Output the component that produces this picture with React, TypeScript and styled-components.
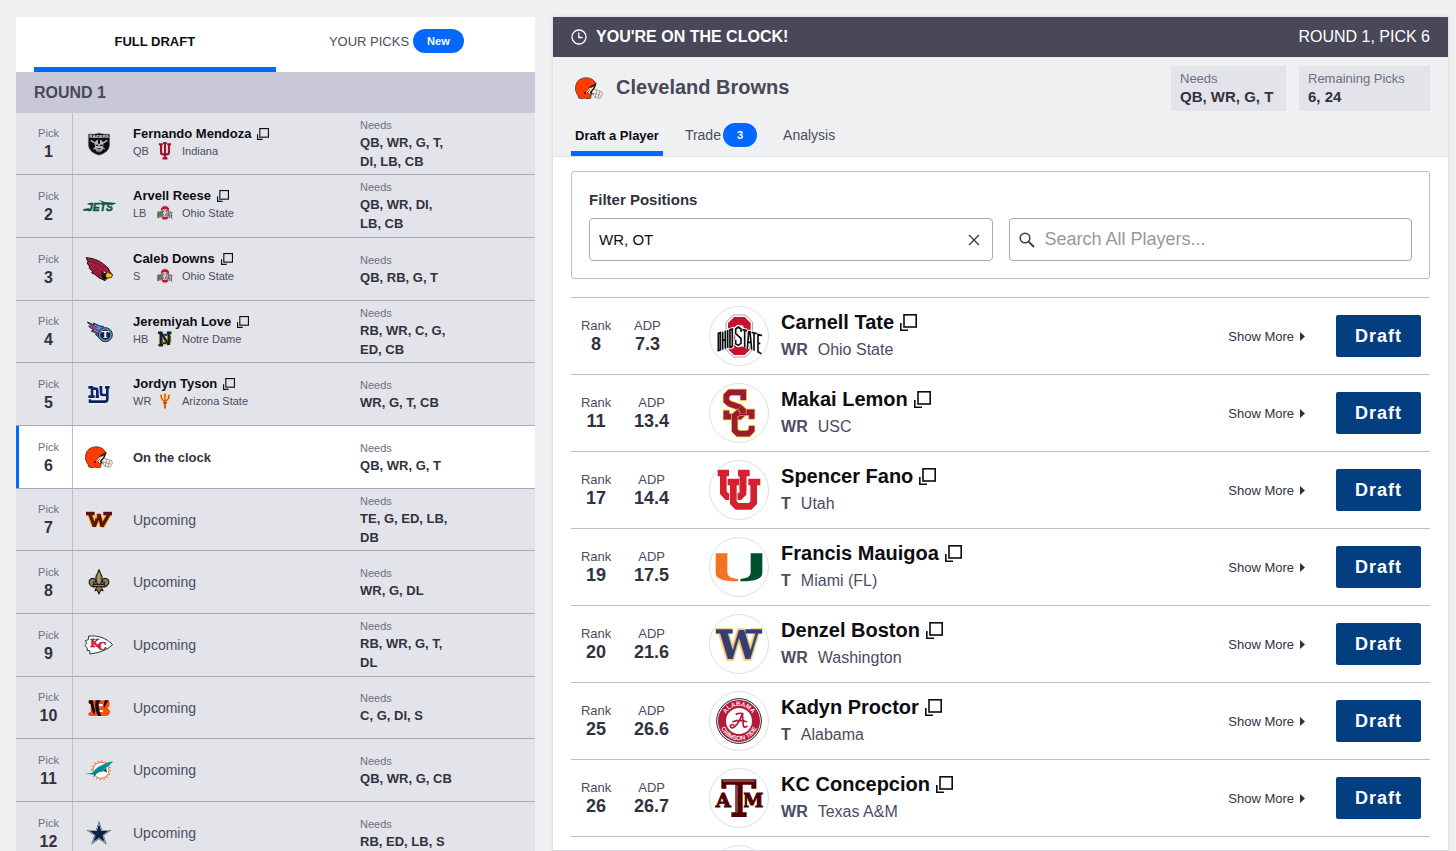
import React, { useId, useState } from "react";
import styled, { createGlobalStyle, css } from "styled-components";

const c = {
  page: "#eff0f2",
  row: "#e3e4ea",
  band: "#c9c8d6",
  line: "#a9a9bb",
  softLine: "#bdbdcd",
  ink: "#0d0d12",
  dark: "#32323f",
  mid: "#4b4c60",
  muted: "#6c6e82",
  blue: "#0468ff",
  navy: "#023e80",
  bar: "#484858",
};

const GlobalStyle = createGlobalStyle`
  *, *::before, *::after { box-sizing: border-box; }
  body {
    margin: 0;
    background: ${c.page};
    color: ${c.dark};
    font-family: "Liberation Sans", Arial, sans-serif;
    overflow: hidden;
  }
  button, input { font-family: inherit; }
  button { cursor: pointer; }
`;

/* ---------- page ---------- */

const Page = styled.div`
  display: grid;
  grid-template-columns: minmax(0, 29fr) minmax(0, 50fr);
  grid-template-rows: minmax(0, 1fr);
  gap: 18px;
  height: 100vh;
  padding: 17px 8px 0 16px;
`;

const DraftColumn = styled.section`
  overflow: hidden;
`;

const ClockPanel = styled.main`
  display: flex;
  flex-direction: column;
  background: #fff;
  overflow: hidden;
  border-bottom: 1px solid #d5d5dc;
  box-shadow: 0 0 3px rgba(50, 50, 70, 0.16);
`;

/* ---------- tabs ---------- */

const MainTabs = styled.div`
  display: flex;
  height: 55px;
  padding: 0 18px;
  background: #fff;
`;

const tabReset = css`
  display: flex;
  align-items: center;
  justify-content: center;
  border: 0;
  border-bottom: 5px solid transparent;
  background: none;
  padding: 0;
  white-space: nowrap;
`;

const MainTab = styled.button<{ $active?: boolean }>`
  ${tabReset}
  flex: 1;
  gap: 4px;
  padding-bottom: 2px;
  font-size: 13px;
  font-weight: ${(p) => (p.$active ? 700 : 400)};
  color: ${(p) => (p.$active ? c.ink : c.mid)};
  border-bottom-color: ${(p) => (p.$active ? c.blue : "transparent")};
`;

const Pill = styled.span`
  display: inline-flex;
  align-items: center;
  height: 24px;
  padding: 0 14px;
  border-radius: 12px;
  background: ${c.blue};
  color: #fff;
  font-size: 11px;
  font-weight: 700;
`;

/* ---------- draft board ---------- */

const RoundHeading = styled.h2`
  margin: 0;
  height: 41px;
  line-height: 41px;
  padding: 0 18px;
  background: ${c.band};
  color: ${c.bar};
  font-size: 16px;
  font-weight: 700;
`;

const PickList = styled.ol`
  list-style: none;
  margin: 0;
  padding: 0;
`;

const PickRow = styled.li<{ $current?: boolean }>`
  display: grid;
  grid-template-columns: 57px 52px minmax(0, 1fr) 175px;
  align-items: center;
  height: 63px;
  border-bottom: 1px solid ${c.line};
  background: ${(p) => (p.$current ? "#fff" : c.row)};
  box-shadow: ${(p) => (p.$current ? `inset 3px 0 0 ${c.blue}` : "none")};

  &:nth-child(3n + 1) {
    height: 62px;
  }
`;

const PickNumber = styled.div`
  display: flex;
  flex-direction: column;
  align-items: center;
  justify-content: center;
  height: 100%;
  padding-left: 9px;
  border-right: 1px solid ${c.softLine};
  font-size: 16px;
  line-height: 21px;
  font-weight: 700;
`;

const SmallLabel = styled.span`
  font-size: 11px;
  line-height: 16px;
  font-weight: 400;
  color: ${c.muted};
`;

const TeamLogo = styled.div`
  display: flex;
  justify-content: center;
`;

const Selection = styled.div`
  padding: 0 0 4px 8px;
`;

const Status = styled.div<{ $current?: boolean }>`
  padding-left: 8px;
  font-size: ${(p) => (p.$current ? 13 : 14)}px;
  font-weight: ${(p) => (p.$current ? 700 : 400)};
  color: ${(p) => (p.$current ? c.dark : c.mid)};
`;

const PickName = styled.a`
  display: flex;
  align-items: center;
  gap: 6px;
  color: ${c.ink};
  font-size: 13px;
  line-height: 18px;
  font-weight: 700;
  text-decoration: none;
`;

const PickMeta = styled.div`
  display: grid;
  grid-template-columns: 24px 16px auto;
  justify-content: start;
  align-items: center;
  height: 16px;
  font-size: 11px;
  color: ${c.mid};

  svg {
    display: block;
  }

  span:last-child {
    padding-left: 9px;
  }
`;

const Needs = styled.div`
  display: flex;
  flex-direction: column;
`;

const NeedsValue = styled.span`
  width: 94px;
  font-size: 13px;
  line-height: 19px;
  font-weight: 700;
`;

/* ---------- clock panel ---------- */

const ClockBar = styled.header`
  display: flex;
  flex: none;
  align-items: center;
  gap: 9px;
  height: 40px;
  padding: 0 18px;
  background: ${c.bar};
  color: #fff;
  font-size: 16px;
`;

const ClockTitle = styled.h1`
  flex: 1;
  margin: 0;
  font-size: 16px;
  font-weight: 700;
`;

const TeamHeader = styled.div`
  flex: none;
  background: ${c.page};
  padding: 9px 18px 0;
  border-bottom: 1px solid #dfe0e6;
`;

const TeamTop = styled.div`
  display: flex;
  align-items: center;
  gap: 13px;
  height: 45px;
`;

const TeamName = styled.h2`
  display: flex;
  align-items: center;
  gap: 12px;
  flex: 1;
  margin: 0;
  padding: 0 0 2px 3px;
  font-size: 20px;
  font-weight: 700;
  color: ${c.bar};
`;

const InfoBox = styled.div<{ $wide?: boolean }>`
  display: flex;
  flex-direction: column;
  justify-content: center;
  height: 45px;
  min-width: ${(p) => (p.$wide ? 131 : 115)}px;
  padding: 0 9px 2px;
  background: ${c.row};
  font-size: 15px;
  line-height: 19px;
  font-weight: 700;
`;

const InfoLabel = styled.span`
  font-size: 13px;
  line-height: 17px;
  font-weight: 400;
  color: ${c.muted};
`;

const PanelTabs = styled.div`
  display: flex;
  gap: 22px;
  height: 45px;
`;

const PanelTab = styled.button<{ $active?: boolean }>`
  ${tabReset}
  gap: 2px;
  padding: 8px 4px 0;
  font-size: ${(p) => (p.$active ? 13 : 14)}px;
  font-weight: ${(p) => (p.$active ? 700 : 400)};
  color: ${(p) => (p.$active ? c.ink : c.mid)};
  border-bottom-color: ${(p) => (p.$active ? c.blue : "transparent")};

  & + & {
    padding: 8px 4px 0 0;
  }
`;

const PanelBody = styled.div`
  padding: 14px 18px 0;
`;

const FilterBox = styled.form`
  padding: 18px 17px 17px;
  border: 1px solid ${c.softLine};
  border-radius: 3px;
`;

const FilterLabel = styled.label`
  display: block;
  line-height: 20px;
  margin-bottom: 8px;
  font-size: 15px;
  font-weight: 700;
  color: ${c.dark};
`;

const FilterFields = styled.div`
  display: grid;
  grid-template-columns: 1fr 1fr;
  gap: 16px;
`;

const Field = styled.div`
  display: flex;
  align-items: center;
  height: 43px;
  padding: 0 9px;
  border: 1px solid ${c.line};
  border-radius: 4px;
  background: #fff;
`;

const TextInput = styled.input<{ $large?: boolean }>`
  flex: 1;
  min-width: 0;
  border: 0;
  outline: 0;
  padding: 0;
  background: none;
  font-size: ${(p) => (p.$large ? 18 : 15)}px;
  color: ${c.ink};

  &::placeholder {
    color: #96979f;
    opacity: 1;
  }
`;

const SearchMark = styled.span`
  display: flex;
  margin-right: 10px;
`;

const ClearButton = styled.button`
  display: flex;
  padding: 3px;
  border: 0;
  background: none;
`;

const PlayerList = styled.ul`
  list-style: none;
  margin: 18px 0 0;
  padding: 0;
  border-top: 1px solid ${c.softLine};
`;

const PlayerRow = styled.li`
  display: grid;
  grid-template-columns: 32px 97px 60px minmax(0, 1fr) auto auto;
  align-items: center;
  height: 77px;
  padding: 0 9px;
  border-bottom: 1px solid ${c.softLine};
`;

const Stat = styled.div<{ $offset?: boolean }>`
  display: inline-flex;
  flex-direction: column;
  align-items: center;
  justify-self: start;
  margin-left: ${(p) => (p.$offset ? 22 : 0)}px;
  min-width: ${(p) => (p.$offset ? 0 : 32)}px;
  padding-bottom: 2px;
  font-size: 18px;
  line-height: 20px;
  font-weight: 700;
`;

const StatLabel = styled.span`
  font-size: 13px;
  line-height: 17px;
  font-weight: 400;
  color: ${c.mid};
`;

const Crest = styled.div`
  grid-column: 3;
  width: 60px;
  height: 60px;
  border: 1px solid #dedee6;
  border-radius: 50%;
  background: #fff;

  svg {
    display: block;
    margin: -1px;
  }
`;

const PlayerInfo = styled.div`
  padding-left: 12px;
`;

const PlayerName = styled.a`
  display: flex;
  align-items: center;
  gap: 6px;
  font-size: 20px;
  line-height: 28px;
  font-weight: 700;
  color: ${c.ink};
  text-decoration: none;
`;

const PlayerMeta = styled.div`
  display: flex;
  gap: 10px;
  font-size: 16px;
  line-height: 28px;
  color: ${c.mid};
`;

const ShowMore = styled.button`
  display: flex;
  align-items: center;
  gap: 6px;
  padding: 0;
  border: 0;
  background: none;
  color: ${c.dark};
  font-size: 13px;
`;

const DraftButton = styled.button`
  width: 85px;
  height: 42px;
  margin-left: 31px;
  padding: 0;
  border: 0;
  border-radius: 2px;
  background: ${c.navy};
  color: #fff;
  font-size: 18px;
  font-weight: 700;
  letter-spacing: 1px;
`;

/* ---------- icons ---------- */

const OpenIcon = ({ size }: { size: number }) => (
  <svg width={size} height={size} viewBox="0 0 17 17" fill="none" stroke="#0d0d12" aria-hidden="true">
    <rect x="4" y="0.8" width="12.2" height="12.2" strokeWidth="1.6" />
    <path d="M0.8 9v7.2H8" strokeWidth="1.6" />
  </svg>
);

const ClockIcon = () => (
  <svg width="16" height="16" viewBox="0 0 16 16" fill="none" stroke="#fff" strokeWidth="1.3" aria-hidden="true">
    <circle cx="8" cy="8" r="7" />
    <path d="M7.8 3.6V8.5H11.6" />
  </svg>
);

const CloseIcon = () => (
  <svg width="12" height="12" viewBox="0 0 12 12" stroke="#3c3c4e" strokeWidth="1.4" aria-hidden="true">
    <path d="M1 1L11 11M11 1L1 11" />
  </svg>
);

const SearchIcon = () => (
  <svg width="16" height="16" viewBox="0 0 16 16" fill="none" stroke="#3c3c4e" strokeWidth="1.6" aria-hidden="true">
    <circle cx="6" cy="6" r="4.8" />
    <path d="M9.6 9.6L15 15" strokeWidth="2" />
  </svg>
);

const Caret = () => (
  <svg width="5" height="9" viewBox="0 0 5 9" aria-hidden="true">
    <path d="M0 0L5 4.5L0 9Z" fill="#32323f" />
  </svg>
);

/* ---------- NFL marks ---------- */

const Mark = ({ children }: { children: React.ReactNode }) => (
  <svg width="30" height="30" viewBox="0 0 90 90" overflow="visible" aria-hidden="true">
    {children}
  </svg>
);

const Raiders = () => (
  <Mark>
    <path d="M13 15Q30 17 45 12Q60 17 77 15V50Q74 70 45 79Q16 70 13 50Z" fill="#0b0c0e" stroke="#8e9398" strokeWidth="1.5" />
    <text x="45" y="27" textAnchor="middle" fontSize="13" fontWeight="700" fill="#e6e8ea" fontFamily="Liberation Sans">RAIDERS</text>
    <path d="M20 34L62 60M70 34L28 60" stroke="#b9bec3" strokeWidth="4" />
    <path d="M32 46Q32 32 45 32Q58 32 58 46L56 62Q45 78 34 62Z" fill="#b4b9be" />
    <path d="M42 32H48V44H42Z" fill="#0b0c0e" />
    <path d="M34 47H43V51H36ZM48 47H57L55 51H48Z" fill="#0b0c0e" />
    <path d="M38 59H52M40 66H50" stroke="#0b0c0e" strokeWidth="2.4" />
  </Mark>
);

const Jets = () => (
  <Mark>
    <path d="M44 26L62 33L96 36L92 40H50L56 35Z" fill="#115740" />
    <text x="9" y="59" fontSize="31" fontWeight="700" fontStyle="italic" fill="#115740" stroke="#115740" strokeWidth="1.5" fontFamily="Liberation Sans">JETS</text>
    <path d="M-4 59L0 53H22L18 59ZM12 37H30L27 41H10Z" fill="#115740" />
  </Mark>
);

const Cardinals = () => (
  <Mark>
    <path d="M6 11Q38 13 58 30Q76 42 78 54L85 62L82 70L70 72L63 80Q42 72 31 60L23 57L26 52Q12 42 17 38L9 27L13 24Z" fill="#a51c3f" stroke="#111" strokeWidth="3" strokeLinejoin="round" />
    <path d="M16 20Q40 26 60 46M20 34Q38 40 52 56M29 50L50 66" stroke="#5d0f24" strokeWidth="2" fill="none" />
    <path d="M54 50L68 55L70 70L60 77L52 66Z" fill="#111" />
    <path d="M70 54L86 62L82 71L68 72L64 64Z" fill="#ffb612" stroke="#111" strokeWidth="1.5" />
    <path d="M58 52L66 55L60 58Z" fill="#fff" />
  </Mark>
);

const Titans = () => (
  <Mark>
    <path d="M10 15L30 24L28 18L48 27L58 28L46 62L34 52L40 50L22 42L30 40L14 28L22 27Z" fill="#4b92db" stroke="#0c2340" strokeWidth="3" strokeLinejoin="round" />
    <path d="M15 19L40 32M24 30L44 42M32 44L44 50" stroke="#c8102e" strokeWidth="3.5" />
    <circle cx="64" cy="53" r="21" fill="#4b92db" stroke="#0c2340" strokeWidth="3" />
    <circle cx="64" cy="53" r="16.5" fill="#0c2340" stroke="#8db9e6" strokeWidth="2" />
    <text x="64" y="64" textAnchor="middle" fontSize="30" fontWeight="700" fill="#fff" fontFamily="DejaVu Serif">T</text>
    <circle cx="64" cy="38" r="3" fill="#c8102e" />
  </Mark>
);

const Giants = () => {
  const monogram =
    "M13 25H24V52M13 53H32M24 29H34Q40 29 40 35V53M35 53H45" +
    "M46 25H55M51 25V42Q51 48 57 48H68M63 25H77M70 25V61Q70 68 63 68H18V61";
  return (
    <Mark>
      <path d={monogram} fill="none" stroke="#fff" strokeWidth="11" />
      <path d={monogram} fill="none" stroke="#0b2265" strokeWidth="8" />
    </Mark>
  );
};

const Browns = () => (
  <Mark>
    <path d="M50 40L84 56L85 66L78 76L60 72L54 52Z" fill="#f3f0e9" />
    <path d="M9 64Q2 52 5 38Q10 15 36 14Q60 15 66 34L52 38Q44 42 46 52L41 58L46 64L52 62L50 76Q38 78 30 75L24 77L14 75L12 66Z" fill="#ff3c00" stroke="#3b1a0a" strokeWidth="2" strokeLinejoin="round" />
    <path d="M46 45L64 35L60 46L50 58L56 64" fill="none" stroke="#2b1408" strokeWidth="4.5" />
    <path d="M38 58L50 44" stroke="#fff" strokeWidth="3" />
    <path d="M58 48L84 57L85 64L78 76L62 73L56 60L80 66M68 52L64 74M77 56L72 75" fill="none" stroke="#8d8578" strokeWidth="2.2" />
    <circle cx="33" cy="60" r="3" fill="#2b1408" />
  </Mark>
);

const Commanders = () => {
  const strokes = "M6 26H32M58 26H84M17 26L31 64L45 28L54 64L76 26";
  return (
    <Mark>
      <g fill="none" strokeLinejoin="bevel">
        <path d={strokes} stroke="#ffb612" strokeWidth="16" />
        <path d={strokes} stroke="#5a1414" strokeWidth="10" />
        <path d="M38 30V40" stroke="#ffb612" strokeWidth="3" />
      </g>
    </Mark>
  );
};

const Saints = () => (
  <Mark>
    <g fill="#94804e" stroke="#24221d" strokeWidth="3.5" strokeLinejoin="round">
      <path d="M37 54Q32 64 22 57Q12 48 17 39Q24 31 33 36Q38 40 34 46Q30 43 28 47Q30 52 38 51Z" />
      <path d="M53 54Q58 64 68 57Q78 48 73 39Q66 31 57 36Q52 40 56 46Q60 43 62 47Q60 52 52 51Z" />
      <path d="M45 8Q49 20 54 28Q56 38 50 52H40Q34 38 36 28Q41 20 45 8Z" />
      <path d="M39 58H51L57 71L50 69L45 81L40 69L33 71Z" />
      <path d="M28 52H62V59H28Z" />
    </g>
    <path d="M45 20V50" stroke="#c5b27c" strokeWidth="3" />
  </Mark>
);

const Chiefs = () => (
  <Mark>
    <path d="M14 18Q58 14 86 44Q64 66 18 72L17 62L9 61L10 54L3 47L8 40L4 32L13 29Z" fill="#fff" stroke="#15171a" strokeWidth="2.6" strokeLinejoin="round" />
    <g fontFamily="DejaVu Serif" fontWeight="700" fill="#e31837" stroke="#15171a" strokeWidth="1.6" paintOrder="stroke">
      <text x="19" y="52" fontSize="31">K</text>
      <text x="41" y="59" fontSize="33">C</text>
    </g>
  </Mark>
);

const Bengals = () => (
  <Mark>
    <path d="M14 18H76Q85 22 81 38L77 44L83 54Q83 71 70 73H18Q5 68 11 58L16 54V34Q6 30 14 18Z" fill="#f7f7f7" stroke="#c8c8cc" strokeWidth="1.5" />
    <path d="M14 22H70Q81 24 76 40L71 44L79 54Q78 69 66 69H18Q10 66 14 59L20 56V34Q11 32 14 22Z" fill="#fb4f14" />
    <path d="M15 22H27Q28 40 34 54L30 66Q22 50 20 34Q12 32 15 22ZM35 22H50L43 34Q44 50 52 69H42Q30 46 35 22ZM62 22H75Q66 32 60 46Q57 36 62 22Z" fill="#111" />
    <path d="M45 33H56V40H45ZM47 51H57V57H47Z" fill="#fff" />
  </Mark>
);

const Dolphins = () => (
  <Mark>
    <circle cx="51" cy="46" r="28" fill="none" stroke="#fc4c02" strokeWidth="4" strokeDasharray="3 8" />
    <circle cx="51" cy="46" r="24" fill="#fff" stroke="#fc4c02" strokeWidth="2.6" />
    <path d="M-1 50Q12 58 26 52Q38 34 60 27Q68 20 90 19L80 27Q76 35 66 39Q54 51 42 52L32 66L27 59Q12 62 -1 50Z" fill="#008e97" stroke="#fff" strokeWidth="1" />
    <path d="M42 52Q58 49 66 39L69 52L59 48ZM29 56Q44 51 60 39" fill="#005778" stroke="#005778" strokeWidth="1" />
  </Mark>
);

const star = (cx: number, cy: number, r: number) =>
  Array.from({ length: 10 }, (_, i) => {
    const radius = i % 2 ? r * 0.382 : r;
    const angle = (Math.PI / 5) * i - Math.PI / 2;
    return `${(cx + radius * Math.cos(angle)).toFixed(1)},${(cy + radius * Math.sin(angle)).toFixed(1)}`;
  }).join(" ");

const Cowboys = () => (
  <Mark>
    <polygon points={star(45, 48, 39)} fill="#0a2342" />
    <polygon points={star(45, 48, 36)} fill="#b9c3ce" />
    <polygon points={star(45, 48, 29)} fill="#0a2342" />
  </Mark>
);

/* ---------- college marks, drawn on a 180 unit circle ---------- */

const College = ({ small, box = "0 0 180 180", children }: { small?: boolean; box?: string; children: React.ReactNode }) => (
  <svg width={small ? 16 : 60} height={small ? 16 : 60} viewBox={box} overflow="visible" aria-hidden="true">
    {children}
  </svg>
);

const OhioState = ({ small }: { small?: boolean }) => {
  const script =
    "M28 82L34 80V132L28 134ZM41 77V131M49 74V128M41 104L49 101M56 72V126M63 71L70 69V122L63 124Z" +
    "M96 78V69L88 63L80 69V83L96 97V112L88 118L80 113V102" +
    "M100 71L114 74M107 72V123M115 129L119 77H123L128 131M116 109H126" +
    "M128 79L143 83M135 81V134M157 91V88L147 85V137L157 143M147 111L154 113";
  return (
    <College small={small} box={small ? "22 22 138 138" : undefined}>
      <path d="M73 27H109L131 49V131L109 153H73L51 131V49Z" fill="#fff" stroke="#8c9094" strokeWidth="2.5" />
      <path fillRule="evenodd" d="M75 33H107L125 51V129L107 147H75L57 129V51ZM83 58L78 63V117L83 122H99L104 117V63L99 58Z" fill="#c8102e" />
      <path d="M83 58H99L104 63V117L99 122H83L78 117V63Z" fill="#fff" stroke="#8c9094" strokeWidth="2" />
      <path d={script} fill="none" stroke="#fff" strokeWidth="11" />
      <path d={script} fill="none" stroke="#0d0d0d" strokeWidth="5" />
    </College>
  );
};

const Usc = () => (
  <College>
    {[
      "M103 52V28H62L52 38V54L61 62L92 73L102 82V92L92 101H52V82",
      "M128 108V88H88L77 98V142L87 152H118L128 142V128",
      "M92 73L102 82V92",
    ].map((d, i) => (
      <g key={i} fill="none" strokeLinecap="butt">
        <path d={d} stroke="#fdc81f" strokeWidth="21" />
        <path d={d} stroke="#9d1b32" strokeWidth="17" />
      </g>
    ))}
    <path d="M43 81H61M94 53H112M119 109H137M119 127H137" stroke="#fdc81f" strokeWidth="3" />
  </College>
);

const Utah = () => (
  <College>
    {[
      "M43 38V98L54 110H92L102 100V38M26 39H60M87 39H122",
      "M73 64V128L84 139H123L134 128V64M56 66H90M118 66H154",
    ].map((d, i) => (
      <g key={i} fill="none">
        <path d={d} stroke="#fff" strokeWidth="25" />
        <path d={d} stroke="#d5202f" strokeWidth="20" />
      </g>
    ))}
    <path d="M102 50V92" stroke="#d5202f" strokeWidth="20" />
  </College>
);

const Miami = () => (
  <College>
    <path d="M20 49H55V108Q56 124 87 126V133Q20 134 20 108Z" fill="#f47321" />
    <path d="M160 49H125V108Q124 124 94 126V133Q160 134 160 108Z" fill="#005030" />
  </College>
);

const Washington = () => (
  <College>
    <g fontFamily="DejaVu Serif" fontWeight="700" fontSize="116" textAnchor="middle">
      <text x="90" y="135" fill="#363c74" stroke="#f0cf7a" strokeWidth="10" paintOrder="stroke">W</text>
    </g>
    <path d="M21 52H71M109 52H159" stroke="#363c74" strokeWidth="13" />
  </College>
);

const Alabama = () => {
  const id = useId();
  return (
    <College>
      <circle cx="90" cy="90" r="67" fill="#fff" stroke="#1b1b1b" strokeWidth="3" />
      <circle cx="90" cy="90" r="51" fill="none" stroke="#b3193a" strokeWidth="24" />
      <path id={`${id}t`} d="M45 90A45 45 0 0 1 135 90" fill="none" />
      <path id={`${id}b`} d="M32 90A58 58 0 0 0 148 90" fill="none" />
      <g fill="#f7e6ea" fontSize="19" fontWeight="700" fontFamily="Liberation Sans" textAnchor="middle">
        <text>
          <textPath href={`#${id}t`} startOffset="50%">ALABAMA</textPath>
        </text>
        <text>
          <textPath href={`#${id}b`} startOffset="50%">CRIMSON TIDE</textPath>
        </text>
      </g>
      <path
        d="M100 68Q90 96 76 108Q66 114 64 106Q66 99 74 102M100 68L103 104Q104 112 114 106M82 70Q92 64 102 69M72 92Q92 84 112 92"
        fill="none"
        stroke="#b3193a"
        strokeWidth="5"
        strokeLinecap="round"
      />
    </College>
  );
};

const TexasAM = () => (
  <College>
    <g fill="#500000" fontFamily="DejaVu Serif" fontWeight="700" stroke="#500000" strokeWidth="3">
      <text x="20" y="117" fontSize="58">A</text>
      <text x="101" y="117" fontSize="56">M</text>
    </g>
    <path d="M37 34H142V62H127V50H101V133H113V147H67V133H79V50H52V62H37Z" fill="#500000" stroke="#fff" strokeWidth="6" paintOrder="stroke" />
    <path d="M42 39H137M84 52V134" stroke="#d9c9c9" strokeWidth="2" />
  </College>
);

const Indiana = () => (
  <College small box="0 0 52 52">
    <path d="M6 4H19M13 4V30Q13 37 20 37H32Q39 37 39 30V4M33 4H46M20 0H32M26 0V52M18 50H34" fill="none" stroke="#a3142b" strokeWidth="7" />
  </College>
);

const NotreDame = () => (
  <College small box="0 0 50 50">
    <g fill="none">
      <path d="M10 12H34L40 18V32L34 38H10M15 12V38" stroke="#c99700" strokeWidth="9" />
      <path d="M10 12H34L40 18V32L34 38H10M15 12V38" stroke="#0c2340" strokeWidth="6" />
      <path d="M4 5H16M12 5V44M5 44H19M13 6L36 43M37 5V44M31 5H45" stroke="#c99700" strokeWidth="10" />
      <path d="M3 6H17M12 5V44M5 44H19M13 6L36 43M37 5V44M31 6H45" stroke="#0c2340" strokeWidth="7" />
    </g>
  </College>
);

const ArizonaState = () => (
  <College small box="0 0 50 50">
    <g fill="none" strokeLinejoin="round">
      <path d="M12 4L14 18L20 26H30L36 18L38 4M25 0V50" stroke="#ffc627" strokeWidth="8" />
      <path d="M12 6L15 18L21 25H29L35 18L38 6M25 3V26" stroke="#a82c4c" strokeWidth="3" />
      <path d="M25 28V48M19 31H31" stroke="#a82c4c" strokeWidth="4" />
    </g>
  </College>
);

/* ---------- data ---------- */

type Pick = {
  team: React.ReactNode;
  needs: string;
  player?: string;
  pos?: string;
  school?: string;
  mark?: React.ReactNode;
  current?: boolean;
};

const picks: Pick[] = [
  { team: <Raiders />, needs: "QB, WR, G, T, DI, LB, CB", player: "Fernando Mendoza", pos: "QB", school: "Indiana", mark: <Indiana /> },
  { team: <Jets />, needs: "QB, WR, DI, LB, CB", player: "Arvell Reese", pos: "LB", school: "Ohio State", mark: <OhioState small /> },
  { team: <Cardinals />, needs: "QB, RB, G, T", player: "Caleb Downs", pos: "S", school: "Ohio State", mark: <OhioState small /> },
  { team: <Titans />, needs: "RB, WR, C, G, ED, CB", player: "Jeremiyah Love", pos: "HB", school: "Notre Dame", mark: <NotreDame /> },
  { team: <Giants />, needs: "WR, G, T, CB", player: "Jordyn Tyson", pos: "WR", school: "Arizona State", mark: <ArizonaState /> },
  { team: <Browns />, needs: "QB, WR, G, T", current: true },
  { team: <Commanders />, needs: "TE, G, ED, LB, DB" },
  { team: <Saints />, needs: "WR, G, DL" },
  { team: <Chiefs />, needs: "RB, WR, G, T, DL" },
  { team: <Bengals />, needs: "C, G, DI, S" },
  { team: <Dolphins />, needs: "QB, WR, G, CB" },
  { team: <Cowboys />, needs: "RB, ED, LB, S" },
];

const players = [
  { rank: 8, adp: "7.3", name: "Carnell Tate", pos: "WR", school: "Ohio State", mark: <OhioState /> },
  { rank: 11, adp: "13.4", name: "Makai Lemon", pos: "WR", school: "USC", mark: <Usc /> },
  { rank: 17, adp: "14.4", name: "Spencer Fano", pos: "T", school: "Utah", mark: <Utah /> },
  { rank: 19, adp: "17.5", name: "Francis Mauigoa", pos: "T", school: "Miami (FL)", mark: <Miami /> },
  { rank: 20, adp: "21.6", name: "Denzel Boston", pos: "WR", school: "Washington", mark: <Washington /> },
  { rank: 25, adp: "26.6", name: "Kadyn Proctor", pos: "T", school: "Alabama", mark: <Alabama /> },
  { rank: 26, adp: "26.7", name: "KC Concepcion", pos: "WR", school: "Texas A&M", mark: <TexasAM /> },
];

/* ---------- app ---------- */

export default function App() {
  const [positions, setPositions] = useState("WR, OT");
  const [query, setQuery] = useState("");

  return (
    <>
      <GlobalStyle />
      <Page>
        <DraftColumn>
          <MainTabs>
            <MainTab $active>FULL DRAFT</MainTab>
            <MainTab>
              YOUR PICKS <Pill>New</Pill>
            </MainTab>
          </MainTabs>
          <RoundHeading>ROUND 1</RoundHeading>
          <PickList>
            {picks.map((p, i) => (
              <PickRow key={i} $current={p.current}>
                <PickNumber>
                  <SmallLabel>Pick</SmallLabel>
                  {i + 1}
                </PickNumber>
                <TeamLogo>{p.team}</TeamLogo>
                {p.player ? (
                  <Selection>
                    <PickName href="#player">
                      {p.player}
                      <OpenIcon size={12} />
                    </PickName>
                    <PickMeta>
                      <span>{p.pos}</span>
                      {p.mark}
                      <span>{p.school}</span>
                    </PickMeta>
                  </Selection>
                ) : (
                  <Status $current={p.current}>{p.current ? "On the clock" : "Upcoming"}</Status>
                )}
                <Needs>
                  <SmallLabel>Needs</SmallLabel>
                  <NeedsValue>{p.needs}</NeedsValue>
                </Needs>
              </PickRow>
            ))}
          </PickList>
        </DraftColumn>

        <ClockPanel>
          <ClockBar>
            <ClockIcon />
            <ClockTitle>YOU'RE ON THE CLOCK!</ClockTitle>
            <span>ROUND 1, PICK 6</span>
          </ClockBar>
          <TeamHeader>
            <TeamTop>
              <TeamName>
                <Browns />
                Cleveland Browns
              </TeamName>
              <InfoBox>
                <InfoLabel>Needs</InfoLabel>
                QB, WR, G, T
              </InfoBox>
              <InfoBox $wide>
                <InfoLabel>Remaining Picks</InfoLabel>
                6, 24
              </InfoBox>
            </TeamTop>
            <PanelTabs>
              <PanelTab $active>Draft a Player</PanelTab>
              <PanelTab>
                Trade <Pill>3</Pill>
              </PanelTab>
              <PanelTab>Analysis</PanelTab>
            </PanelTabs>
          </TeamHeader>
          <PanelBody>
            <FilterBox onSubmit={(e) => e.preventDefault()}>
              <FilterLabel htmlFor="positions">Filter Positions</FilterLabel>
              <FilterFields>
                <Field>
                  <TextInput id="positions" value={positions} onChange={(e) => setPositions(e.target.value)} />
                  <ClearButton type="button" aria-label="Clear positions" onClick={() => setPositions("")}>
                    <CloseIcon />
                  </ClearButton>
                </Field>
                <Field>
                  <SearchMark>
                    <SearchIcon />
                  </SearchMark>
                  <TextInput
                    $large
                    aria-label="Search All Players"
                    placeholder="Search All Players..."
                    value={query}
                    onChange={(e) => setQuery(e.target.value)}
                  />
                </Field>
              </FilterFields>
            </FilterBox>
            <PlayerList>
              {players.map((p) => (
                <PlayerRow key={p.rank}>
                  <Stat>
                    <StatLabel>Rank</StatLabel>
                    {p.rank}
                  </Stat>
                  <Stat $offset>
                    <StatLabel>ADP</StatLabel>
                    {p.adp}
                  </Stat>
                  <Crest>{p.mark}</Crest>
                  <PlayerInfo>
                    <PlayerName href="#player">
                      {p.name}
                      <OpenIcon size={17} />
                    </PlayerName>
                    <PlayerMeta>
                      <strong>{p.pos}</strong>
                      <span>{p.school}</span>
                    </PlayerMeta>
                  </PlayerInfo>
                  <ShowMore>
                    Show More <Caret />
                  </ShowMore>
                  <DraftButton>Draft</DraftButton>
                </PlayerRow>
              ))}
              <PlayerRow>
                <Crest />
              </PlayerRow>
            </PlayerList>
          </PanelBody>
        </ClockPanel>
      </Page>
    </>
  );
}
